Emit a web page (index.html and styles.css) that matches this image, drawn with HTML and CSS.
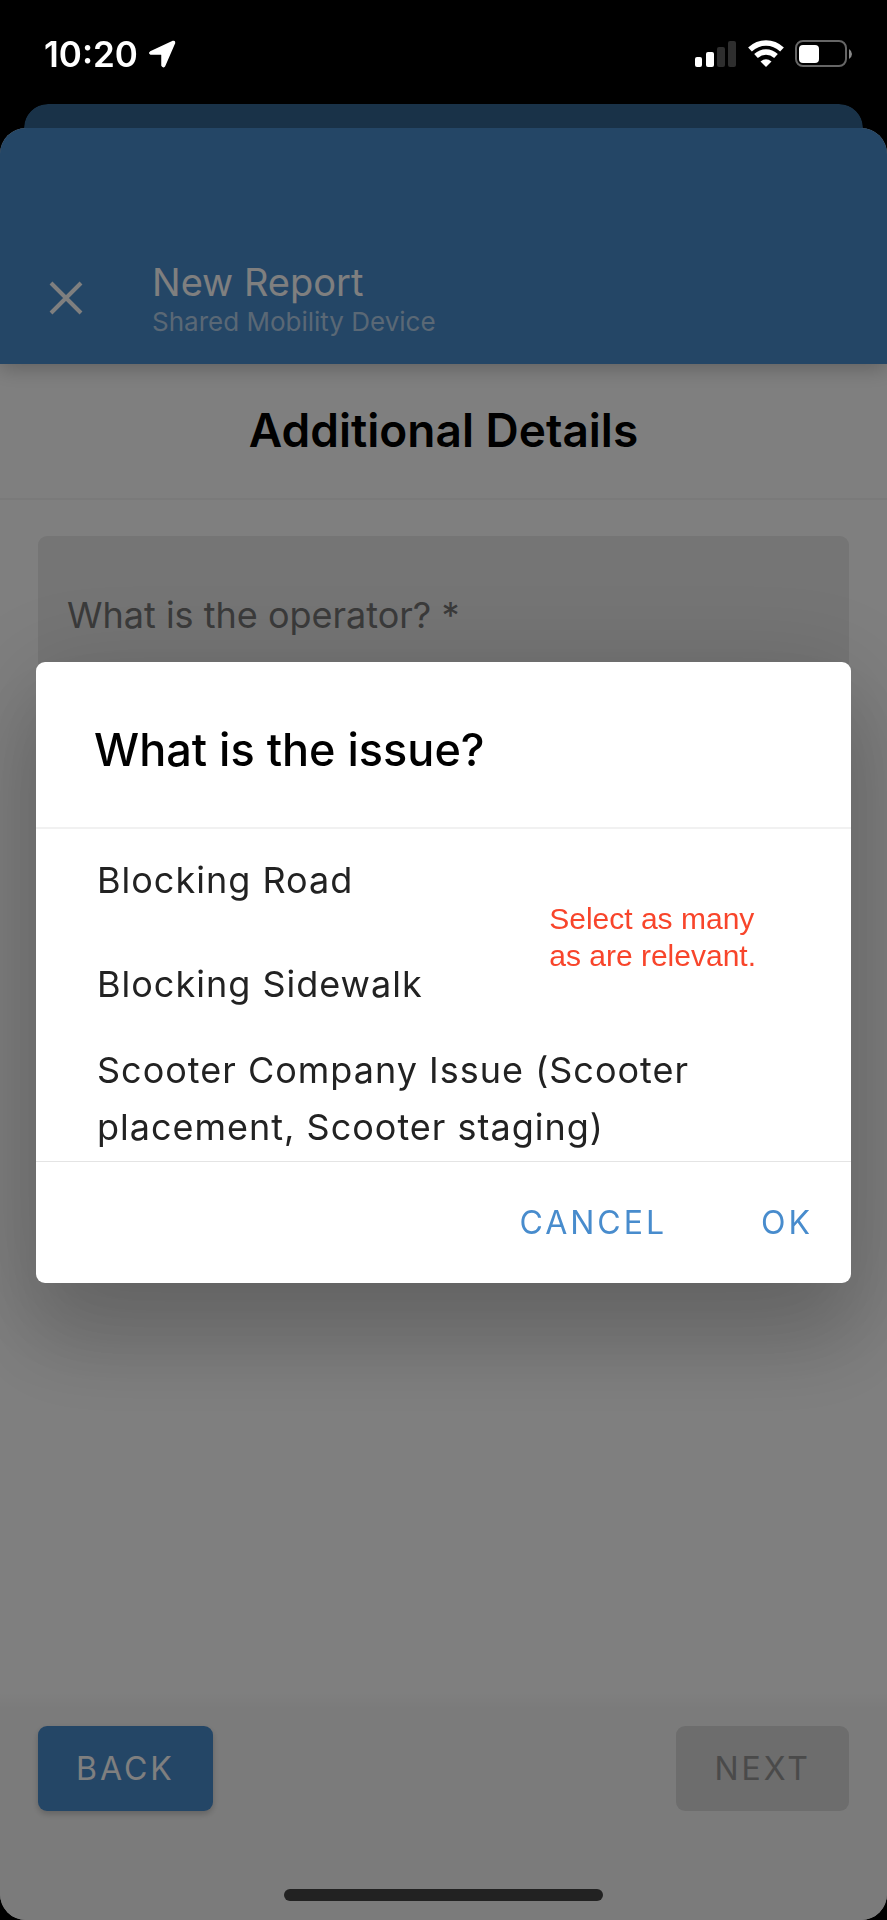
FILE: index.html
```html
<!DOCTYPE html>
<html lang="en">
<head>
<meta charset="utf-8">
<meta name="viewport" content="width=device-width, initial-scale=1">
<title>New Report</title>
<link rel="stylesheet" href="styles.css">
</head>
<body>
<div class="status-bar">
  <div class="status-left">
    <span class="time">10:20</span>
    <svg class="location" width="28" height="28" viewBox="0 0 28 28" aria-hidden="true"><path d="M25 1.500 2.500 12Q1 13 2.500 14H13Q14 14 14 15V25.500Q15 27.500 16.500 26L26.500 3Q26.500 1 25 1.500Z" fill="#fff" stroke="#fff" stroke-width="1.500" stroke-linejoin="round"/></svg>
  </div>
  <div class="status-right">
    <svg width="42" height="28" viewBox="0 0 42 28" aria-hidden="true">
      <rect x="0" y="17" width="7" height="10" rx="2" fill="#fff"/>
      <rect x="11" y="12" width="8" height="15" rx="2" fill="#fff"/>
      <rect x="22" y="7" width="8" height="20" rx="2" fill="#2e2e2e"/>
      <rect x="33" y="1" width="8" height="26" rx="2" fill="#2e2e2e"/>
    </svg>
    <svg width="36" height="28" viewBox="0 0 36 28" aria-hidden="true">
      <path d="M2 9.500Q9 3 18 3T34 9.500" fill="none" stroke="#fff" stroke-width="5.500"/>
      <path d="M8 16Q12.500 12 18 12T28 16" fill="none" stroke="#fff" stroke-width="5.500"/>
      <path d="M12.500 21.500Q18 17 23.500 21.500L18 27Z" fill="#fff"/>
    </svg>
    <svg class="battery" width="58" height="28" viewBox="0 0 58 28" aria-hidden="true">
      <rect x="1" y="1" width="50" height="25" rx="7" fill="none" stroke="#666" stroke-width="2"/>
      <rect x="4" y="5" width="20" height="18" rx="4" fill="#fff"/>
      <path d="M54 9Q57 11 57 14T54 19Z" fill="#888"/>
    </svg>
  </div>
</div>

<div class="back-sheet"></div>

<div class="sheet">
  <header class="app-bar">
    <button class="close" aria-label="Close">
      <svg width="34" height="34" viewBox="0 0 34 34" aria-hidden="true"><path d="M2 2 32 32M32 2 2 32" stroke="#fff" stroke-width="4"/></svg>
    </button>
    <div>
      <div class="app-title">New Report</div>
      <div class="app-subtitle">Shared Mobility Device</div>
    </div>
  </header>
  <h1 class="page-title">Additional Details</h1>
  <main class="form">
    <select class="field" aria-label="What is the operator?">
      <option>What is the operator? *</option>
    </select>
  </main>
  <footer class="actions">
    <button class="action primary">BACK</button>
    <button class="action" disabled>NEXT</button>
  </footer>
</div>

<div class="scrim">
  <div class="dialog" role="dialog" aria-modal="true" aria-labelledby="issue-title">
    <h2 class="dialog-title" id="issue-title">What is the issue?</h2>
    <div class="options">
      <label class="option"><input class="tick" type="checkbox">Blocking Road</label>
      <label class="option"><input class="tick" type="checkbox">Blocking Sidewalk</label>
      <label class="option option-long"><input class="tick" type="checkbox">Scooter Company Issue (Scooter placement, Scooter staging)</label>
      <p class="note">Select as many<br>as are relevant.</p>
    </div>
    <div class="dialog-actions">
      <button class="text-button">CANCEL</button>
      <button class="text-button">OK</button>
    </div>
  </div>
</div>
<div class="home-indicator"></div>
</body>
</html>
```
FILE: styles.css
```css
* {
  box-sizing: border-box;
}

body {
  margin: 0;
  min-height: 100vh;
  display: flex;
  flex-direction: column;
  background: #000;
  font-family: Inter, "Liberation Sans", sans-serif;
}

button,
select {
  font: inherit;
  border: 0;
  margin: 0;
}

.status-bar {
  position: relative;
  z-index: 2;
  height: 104px;
  padding: 4px 34px 0 44px;
  display: flex;
  align-items: center;
  justify-content: space-between;
  color: #fff;
}

.status-left,
.status-right {
  display: flex;
  align-items: center;
}

.status-left {
  gap: 10px;
}

.status-right {
  gap: 11px;
}

.time {
  font-size: 35px;
  font-weight: 600;
}

.back-sheet {
  height: 24px;
  margin: 0 24px;
  border-radius: 24px 24px 0 0;
  background: #326490;
  box-shadow: 0 24px #326490;
  clip-path: inset(0 0 -8px 0 round 24px 24px 0 0);
}

.sheet {
  position: relative;
  flex: 1;
  display: flex;
  flex-direction: column;
  overflow: hidden;
  border-radius: 26px;
  background: #fff;
}

.app-bar {
  position: relative;
  display: flex;
  align-items: center;
  gap: 69px;
  padding: 130px 49px 26px;
  background: #488ccd;
  color: #fff;
  box-shadow: 0 4px 20px rgba(0, 0, 0, 0.25);
}

.close {
  display: flex;
  padding: 0;
  background: none;
}

.app-title {
  font-size: 38px;
  line-height: 48px;
}

.app-subtitle {
  font-size: 26px;
  line-height: 32px;
  color: rgba(255, 255, 255, 0.6);
}

.page-title {
  margin: 0;
  padding: 38px 24px 40px;
  border-bottom: 2px solid #f4f4f4;
  text-align: center;
  font-size: 46px;
  line-height: 56px;
  font-weight: 600;
}

.form {
  flex: 1;
  padding: 36px 38px;
}

.field {
  display: block;
  width: 100%;
  height: 158px;
  padding: 0 29px;
  appearance: none;
  border-radius: 9px 9px 0 0;
  background: #eaeaea;
  color: #757575;
  font-size: 36px;
}

.actions {
  display: flex;
  justify-content: space-between;
  padding: 34px 38px 109px;
  background: linear-gradient(#fff, #f7f7f7 16px);
}

.action {
  padding: 22px 38px;
  border-radius: 9px;
  background: #dadada;
  color: #949494;
  font-size: 32px;
  line-height: 41px;
  letter-spacing: 3px;
}

.primary {
  background: #488ccd;
  color: #fff;
  box-shadow: 0 3px 6px rgba(0, 0, 0, 0.2);
}

.scrim {
  position: fixed;
  inset: 0;
  z-index: 1;
  display: flex;
  align-items: center;
  padding: 24px 36px 0;
  background: rgba(0, 0, 0, 0.5);
}

.dialog {
  flex: 1;
  border-radius: 9px;
  background: #fff;
  box-shadow: 0 55px 86px 7px rgba(0, 0, 0, 0.14), 0 20px 105px 18px rgba(0, 0, 0, 0.12);
}

.dialog-title {
  margin: 0;
  padding: 59px 58px 48px;
  border-bottom: 2px solid #f1f1f1;
  font-size: 45px;
  line-height: 58px;
  font-weight: 500;
}

.options {
  position: relative;
  border-bottom: 1px solid #e4e4e4;
}

.option {
  display: flex;
  align-items: center;
  min-height: 104px;
  padding: 0 61px;
  font-size: 36px;
  line-height: 57px;
  letter-spacing: 1px;
  color: #222;
}

.option-long {
  padding-top: 5px;
  padding-bottom: 5px;
}

.tick {
  position: absolute;
  opacity: 0;
}

.note {
  position: absolute;
  top: 71px;
  right: 95px;
  margin: 0;
  font-family: "Liberation Sans", Arial, sans-serif;
  font-size: 30px;
  line-height: 37px;
  color: #f8452b;
}

.dialog-actions {
  display: flex;
  justify-content: flex-end;
  gap: 18px;
  padding: 18px;
}

.text-button {
  padding: 22px 20px;
  background: none;
  color: #488ccd;
  font-size: 32px;
  line-height: 41px;
  letter-spacing: 3px;
}

.text-button + .text-button {
  padding-left: 56px;
}

.home-indicator {
  position: fixed;
  z-index: 2;
  bottom: 19px;
  left: 0;
  right: 0;
  width: 36%;
  height: 12px;
  margin: 0 auto;
  border-radius: 6px;
  background: #222;
}
```
